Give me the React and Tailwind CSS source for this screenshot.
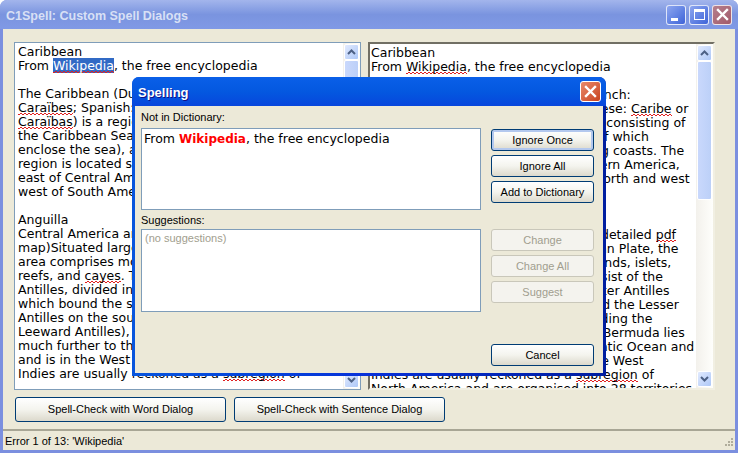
const waveClass =
  "bg-[repeating-linear-gradient(90deg,#e02020_0_2px,transparent_2px_4px),repeating-linear-gradient(90deg,transparent_0_2px,#e02020_2px_4px)] bg-[length:100%_1px,100%_1px] bg-[position:0_100%,0_calc(100%-1px)] bg-no-repeat";

const W = ({ children }) => <span className={waveClass}>{children}</span>;

const leftLines = [
  "Caribbean",
  <>From <span className={`${waveClass} bg-[#316ac5] text-white`}>Wikipedia</span>, the free encyclopedia</>,
  "\u00a0",
  "The Caribbean (Dutch: Caraïben; French:",
  <><W>Caraïbes</W>; Spanish: Caribe; Portuguese:</>,
  <><W>Caraïbas</W>) is a region of the Americas</>,
  "the Caribbean Sea, its islands (most of",
  "enclose the sea), and the surrounding",
  "region is located southeast of Northern",
  "east of Central America, and to the north",
  "west of South America.",
  "\u00a0",
  "Anguilla",
  "Central America and the Caribbean (detailed",
  "map)Situated largely on the Caribbean Plate",
  "area comprises more than 7,000 islands,",
  <>reefs, and <W>cayes</W>. These islands consist</>,
  "Antilles, divided into the larger Greater",
  "which bound the sea on the north and",
  "Antilles on the south and east (including",
  "Leeward Antilles), and the Lucayan",
  "much further to the north in the Atlantic",
  "and is in the West Indies though the West",
  <>Indies are usually reckoned as a <W>subregion</W> of</>,
];

const rightLines = [
  "Caribbean",
  <>From <W>Wikipedia</W>, the free encyclopedia</>,
  "\u00a0",
  "The Caribbean (Dutch:\u00a0\u00a0Caraïben; French:",
  <><W>Caraïbes</W>; Spanish:{"\u00a0\u00a0\u00a0\u00a0"}Caribe; Portuguese: <W>Caribe</W> or</>,
  <><W>Caraïbas</W>) is a region of the Americas consisting of</>,
  "the Caribbean Sea, its islands most of which",
  "enclose the sea), and the surrounding coasts. The",
  "region is located south-east of Northern America,",
  "east of Central America, and to the north and west",
  "of South America.",
  "\u00a0",
  "Anguilla",
  <>Central America and the Caribbean (detailed <W>pdf</W></>,
  "map)Situated largely on the Caribbean Plate, the",
  "area comprises more than 7,000\u00a0\u00a0islands, islets,",
  <>reefs, and <W>cayes</W>. These{"\u00a0\u00a0\u00a0"}islands consist of the</>,
  "Antilles, divided into the\u00a0\u00a0larger Greater Antilles",
  "which bound the sea on the north and the Lesser",
  "Antilles on the south and\u00a0\u00a0east (including the",
  "Leeward Antilles), and the\u00a0\u00a0Lucayan. Bermuda lies",
  "much further to the north in the Atlantic Ocean and",
  "and is in the West Indies,\u00a0\u00a0\u00a0though the West",
  <>Indies are usually reckoned as a <W>subregion</W> of</>,
  "North America and are organised into 28 territories",
];

const Arrow = ({ up }) => (
  <svg width="9" height="6" viewBox="0 0 9 6" className={up ? "" : "rotate-180"}>
    <path d="M1 5 L4.5 1.5 L8 5" fill="none" stroke="#4d6185" strokeWidth="2" />
  </svg>
);

const ScrollBtn = ({ up }) => (
  <div className="h-[16px] w-[15px] shrink-0 flex items-center justify-center rounded-[2px] border border-white bg-gradient-to-br from-[#e1eafe] to-[#aec8f7]">
    <Arrow up={up} />
  </div>
);

const ScrollBar = ({ thumb }) => (
  <div className="w-[17px] h-full shrink-0 flex flex-col items-center py-px bg-gradient-to-r from-[#f3f1ec] to-[#fefefb]">
    <ScrollBtn up />
    <div className={`${thumb} w-[15px] shrink-0 rounded-[2px] border border-white bg-gradient-to-r from-[#c9d8fc] to-[#bcd0f8]`} />
    <div className="flex-1" />
    <ScrollBtn />
  </div>
);

const XpBtn = ({ children, className = "", disabled, def }) => (
  <div
    className={`flex items-center justify-center rounded-[3px] border text-[11px] ${
      disabled
        ? "border-[#c9c7ba] bg-[#f4f3ee] text-[#a19e8e] bg-none"
        : "border-[#003c74] bg-gradient-to-b from-white via-[#f4f4ee] to-[#dcd9cc] text-black"
    } ${def ? "shadow-[inset_0_0_0_2px_#b3c8ee]" : ""} ${className}`}
  >
    {children}
  </div>
);

const CapBtn = ({ children, className }) => (
  <div className={`w-[20px] h-[20px] flex items-center justify-center rounded-[3px] border border-white/80 ${className}`}>
    {children}
  </div>
);

export default function App() {
  return (
    <div
      className="relative w-[738px] h-[453px] overflow-hidden flex flex-col rounded-t-[7px] bg-[#7b8fdf] px-[3px] pb-[3px]"
      style={{ fontFamily: '"Liberation Sans", Tahoma, sans-serif' }}
    >
      {/* title bar */}
      <div className="h-[26px] shrink-0 -mx-[3px] pl-[6px] pr-[6px] pt-[3px] box-content flex items-center justify-between bg-gradient-to-b from-[#a3b5ec] via-[#7a94df] to-[#8099e6]">
        <span className="text-[12.5px] font-bold text-[#d8e0f5]">
          C1Spell: Custom Spell Dialogs
        </span>
        <div className="flex gap-[3px] -mt-[3px]">
          <CapBtn className="bg-gradient-to-br from-[#8ea6ef] to-[#3f63d8] items-end justify-start pb-[3px] pl-[4px]">
            <div className="w-[7px] h-[3px] bg-white" />
          </CapBtn>
          <CapBtn className="bg-gradient-to-br from-[#8ea6ef] to-[#3f63d8]">
            <div className="w-[11px] h-[11px] border border-t-[3px] border-white" />
          </CapBtn>
          <CapBtn className="bg-gradient-to-br from-[#b57f8d] to-[#a25a6a]">
            <svg width="13" height="13" viewBox="0 0 13 13"><path d="M2 2 L11 11 M11 2 L2 11" stroke="#fff" strokeWidth="2.4" strokeLinecap="square" /></svg>
          </CapBtn>
        </div>
      </div>

      {/* client */}
      <div className="flex-1 min-h-0 flex flex-col bg-[#ece9d8]">
        <div className="flex gap-[7px] pl-[11px] pt-[13px] h-[361px] shrink-0">
          <div className="w-[347px] h-[348px] flex border border-[#7f9db9] bg-white overflow-hidden">
            <div
              className="flex-1 pl-[3px] pt-[2px] text-[12.5px] leading-[14px] text-black whitespace-nowrap overflow-hidden"
              style={{ fontFamily: '"DejaVu Sans", sans-serif' }}
            >
              {leftLines.map((l, i) => (<div key={i}>{l}</div>))}
            </div>
            <ScrollBar thumb="h-[140px]" />
          </div>
          <div className="w-[347px] h-[348px] flex border-2 border-t-[#716f64] border-l-[#716f64] border-r-[#f1efe2] border-b-[#f1efe2] bg-white overflow-hidden">
            <div
              className="flex-1 pl-px pt-[2px] text-[12.5px] leading-[14px] text-black whitespace-nowrap overflow-hidden"
              style={{ fontFamily: '"DejaVu Sans", sans-serif' }}
            >
              {rightLines.map((l, i) => (<div key={i}>{l}</div>))}
            </div>
            <ScrollBar thumb="h-[139px]" />
          </div>
        </div>

        <div className="flex gap-[8px] pl-[12px] pt-[7px]">
          <XpBtn className="w-[211px] h-[25px]">Spell-Check with Word Dialog</XpBtn>
          <XpBtn className="w-[211px] h-[25px]">Spell-Check with Sentence Dialog</XpBtn>
        </div>

        <div className="mt-auto h-[21px] pt-px border-t-2 border-t-[#a8a695] flex items-center pl-[2px] relative text-[11px] text-black">
          Error 1 of 13: 'Wikipedia'
          <svg className="absolute right-[1px] bottom-[1px]" width="12" height="12" viewBox="0 0 12 12" fill="#b0ad9c">
            <rect x="9" y="1" width="2" height="2" /><rect x="6" y="4" width="2" height="2" /><rect x="9" y="4" width="2" height="2" />
            <rect x="3" y="7" width="2" height="2" /><rect x="6" y="7" width="2" height="2" /><rect x="9" y="7" width="2" height="2" />
          </svg>
        </div>
      </div>

      {/* dialog */}
      <div className="absolute left-[132px] top-[77px] w-[474px] h-[299px] flex flex-col rounded-t-[7px] bg-gradient-to-r from-[#0855dd] via-[#0831d9] to-[#001ea0] px-[3px] pb-[3px]">
        <div className="h-[29px] shrink-0 -mx-[3px] pl-[6px] pr-[5px] flex items-center justify-between rounded-t-[7px] bg-gradient-to-b from-[#0a5fe8] via-[#0458e0] to-[#0846dc]">
          <span className="pt-[3px] text-[13px] font-bold text-white [text-shadow:1px_1px_0_#0f1089]">Spelling</span>
          <div className="w-[21px] h-[21px] flex items-center justify-center rounded-[3px] border border-white bg-gradient-to-br from-[#e8896a] to-[#c8401a]">
            <svg width="13" height="13" viewBox="0 0 13 13"><path d="M2 2 L11 11 M11 2 L2 11" stroke="#fff" strokeWidth="2.4" strokeLinecap="square" /></svg>
          </div>
        </div>
        <div className="flex-1 min-h-0 flex bg-[#ece9d8] pl-[6px] text-[11px] text-black">
          <div className="w-[340px] flex flex-col">
            <div className="pt-[4px] h-[22px] leading-[14px]">Not in Dictionary:</div>
            <div className="h-[82px] border border-[#7f9db9] bg-white px-[2px] pt-[2px] text-[12.5px] leading-[16px] whitespace-nowrap overflow-hidden" style={{ fontFamily: '"DejaVu Sans", sans-serif' }}>
              From <b className="text-[12px] text-[#ff0000]">Wikipedia</b>, the free encyclopedia
            </div>
            <div className="pt-[3px] h-[19px] leading-[14px]">Suggestions:</div>
            <div className="h-[83px] border border-[#7f9db9] bg-white pl-[3px] pt-[1px] text-[#a19e8e] leading-[14px]">(no suggestions)</div>
          </div>
          <div className="ml-[10px] w-[103px] flex flex-col gap-[4px] pt-[23px]">
            <XpBtn def className="h-[22px]">Ignore Once</XpBtn>
            <XpBtn className="h-[22px]">Ignore All</XpBtn>
            <XpBtn className="h-[22px]">Add to Dictionary</XpBtn>
            <div className="h-[18px]" />
            <XpBtn disabled className="h-[22px]">Change</XpBtn>
            <XpBtn disabled className="h-[22px]">Change All</XpBtn>
            <XpBtn disabled className="h-[22px]">Suggest</XpBtn>
            <div className="h-[33px]" />
            <XpBtn className="h-[22px]">Cancel</XpBtn>
          </div>
        </div>
      </div>
    </div>
  );
}
